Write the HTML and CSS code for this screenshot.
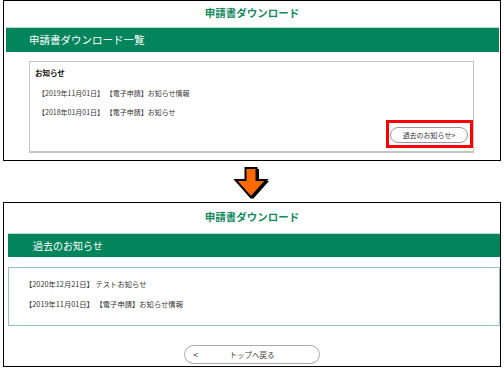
FILE: index.html
```html
<!DOCTYPE html>
<html>
<head>
    <link rel="stylesheet" href="styles.css">
</head>
<body>
    <div class="page">

        <div class="screen screen-top">
            <div class="site-title">申請書ダウンロード</div>
            <div class="bar">申請書ダウンロード一覧</div>
            <div class="news">
                <div class="news-head">お知らせ</div>
                <div class="news-list">
                    <div class="news-item">【2019年11月01日】 【電子申請】お知らせ情報</div>
                    <div class="news-item">【2018年01月01日】 【電子申請】お知らせ</div>
                </div>
                <div class="news-foot">
                    <span class="mark">
                        <span class="pastBtn">過去のお知らせ&gt;</span>
                    </span>
                </div>
            </div>
        </div>

        <div class="arrow">
            <svg width="38" height="33" viewBox="0 0 38 33">
                <polygon points="14,2 26,2 26,14 36,14 20,32 4,14 14,14" fill="#000"/>
                <polygon points="12.5,1 23.5,1 23.5,13 33.5,13 18,30.5 2.5,13 12.5,13" fill="#ff6a00" stroke="#000" stroke-width="2" stroke-linejoin="miter"/>
            </svg>
        </div>

        <div class="screen screen-bottom">
            <div class="site-title">申請書ダウンロード</div>
            <div class="bar">過去のお知らせ</div>
            <div class="news">
                <div class="news-item">【2020年12月21日】 テストお知らせ</div>
                <div class="news-item">【2019年11月01日】 【電子申請】お知らせ情報</div>
            </div>
            <div class="backBtn">
                <span class="back-arrow">&lt;</span>
                <span class="back-text">トップへ戻る</span>
            </div>
        </div>

    </div>
</body>
</html>
```

FILE: styles.css
```css
*{
    margin: 0;
    padding: 0;
    box-sizing: border-box;
}
body {
    font-family: "Noto Sans CJK JP", sans-serif;
    background-color: #fff;
    color: #333;
}
.page{
    width: 504px;
    padding: 0 3px;
}
.screen{
    border: 1px solid #000;
    display: flex;
    flex-direction: column;
}

.site-title{
    height: 26px;
    line-height: 23px;
    text-align: center;
    font-size: 10.5px;
    font-weight: bold;
    color: #118a5e;
}
.bar{
    height: 25px;
    line-height: 24px;
    margin: 0 1px 0 2px;
    padding-left: 23px;
    background-color: #03845a;
    border-top: 1px solid #b7dccd;
    color: #fff;
    font-size: 10.5px;
}

/* top screen */
.screen-top .news{
    margin: 9px 26px 7px 25px;
    padding: 5px 0 3px 5px;
    border: 1px solid #c4c4c4;
    border-bottom-width: 2px;
}
.news-head{
    font-size: 7.5px;
    font-weight: bold;
    line-height: 12px;
    color: #111;
}
.news-list{
    margin-top: 8px;
    padding-left: 3px;
    display: flex;
    flex-direction: column;
    gap: 7px;
}
.news-item{
    font-size: 7px;
    line-height: 12px;
    color: #333;
}
.news-foot{
    display: flex;
    justify-content: flex-end;
    margin-top: 2px;
}
.mark{
    display: block;
    border: 3px solid #f00;
    padding: 4px 2px 2px 1px;
}
.pastBtn{
    display: block;
    width: 78px;
    height: 16px;
    line-height: 14px;
    border: 1px solid #9a9a9a;
    border-radius: 8px;
    text-align: center;
    font-size: 7px;
    color: #333;
}

.arrow{
    height: 41px;
    display: flex;
    justify-content: center;
    padding-top: 6px;
}

/* bottom screen */
.screen-bottom .site-title{
    height: 30px;
    line-height: 28px;
}
.screen-bottom .bar{
    height: 24px;
    line-height: 23px;
    margin: 0 0 0 4px;
    padding-left: 25px;
    font-size: 10px;
}
.screen-bottom .news{
    margin: 10px 0 0 4px;
    padding: 10px 0 15px 16px;
    border: 1px solid #8fc8b4;
    display: flex;
    flex-direction: column;
    gap: 8px;
}
.screen-bottom .news-item{
    font-size: 7.3px;
}
.backBtn{
    display: flex;
    align-items: center;
    width: 136px;
    height: 19px;
    margin: 19px auto 2px;
    padding: 0 14px 0 8px;
    border: 1px solid #aaa;
    border-radius: 10px;
    font-size: 7.5px;
}
.back-arrow{
    width: 6px;
    font-size: 9px;
    color: #333;
}
.back-text{
    flex: 1;
    text-align: center;
    color: #444;
}
```
